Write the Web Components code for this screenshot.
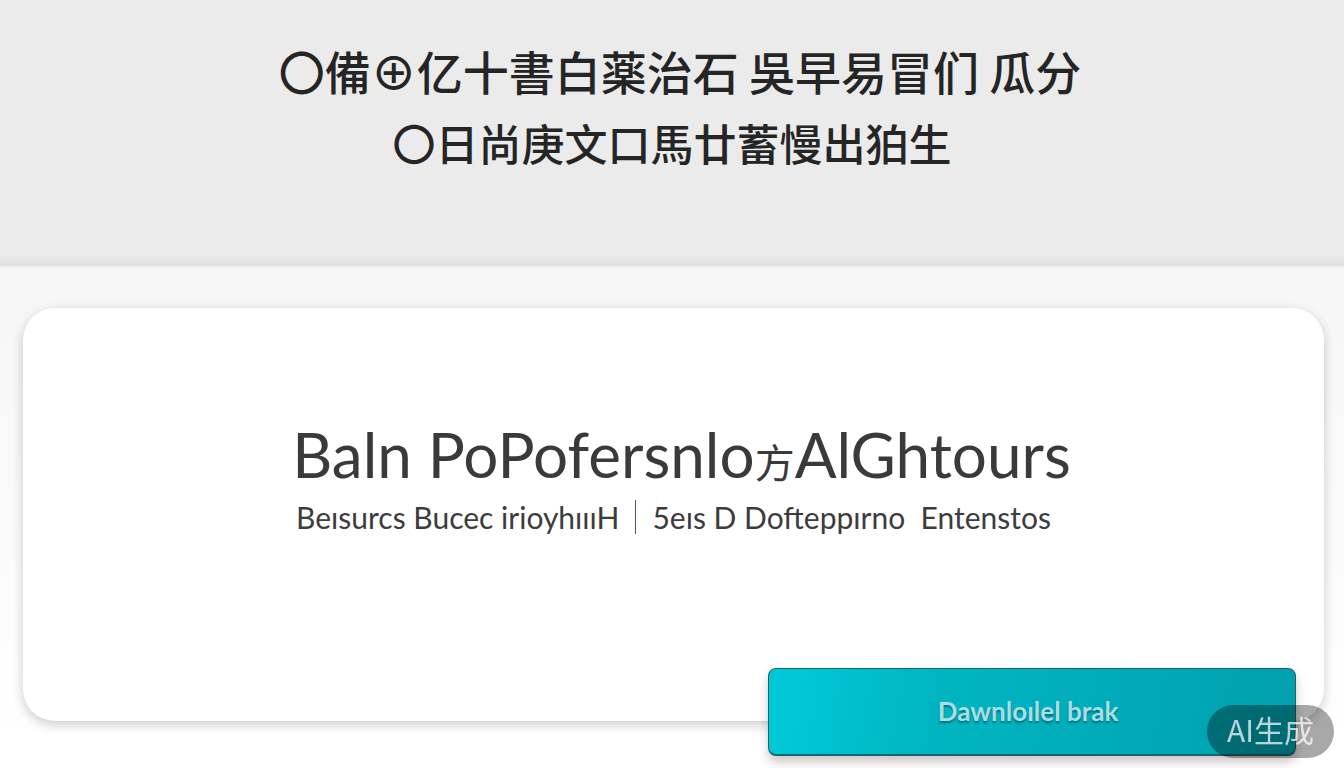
<!DOCTYPE html>
<html lang="zh">
<head>
<meta charset="utf-8">
<meta name="viewport" content="width=device-width, initial-scale=1">
<title>AI生成</title>
<style>
  body { margin: 0; min-height: 100vh; background: linear-gradient(#f6f6f6 35%, #ffffff 96%) no-repeat #fff; font-family: "Noto Sans", "Noto Sans CJK SC", sans-serif; color: #2d2d2d; }
  small { font-size: 40px; line-height: 1; }
</style>
</head>
<body>
<page-banner>
  <span slot="first">〇備⊕亿十書白薬治石 吳早易冒们 瓜分</span>
  <span slot="second">〇日尚庚文口馬廿蓄慢出狛生</span>
</page-banner>
<promo-card>
  <span slot="title">Baln PoPofersnlo<small>方</small>AlGhtours</span>
  <span slot="left">Beısurcs Bucec irioyhıııH</span>
  <span slot="right">5eıs D Dofteppırno&nbsp; Entenstos</span>
  <action-button slot="action">Dawnloılel brak</action-button>
</promo-card>
<origin-badge>AI生成</origin-badge>
<script>
class PageBanner extends HTMLElement {
  constructor() {
    super();
    this.attachShadow({ mode: "open" }).innerHTML = `
      <style>
        :host { display: block; padding: 34px 16px 88px 32px; background: linear-gradient(#ebebeb 96%, #dedede); border-bottom: 2px solid #f0f0f0; text-align: center; color: #252525; }
        h1 { margin: 0; font: 500 46px/72px "Noto Sans CJK JP", "Noto Sans CJK SC", sans-serif; }
        .line { display: block; }
        .second { font-size: 43px; padding-right: 16px; }
      </style>
      <h1><span class="line"><slot name="first"></slot></span><span class="line second"><slot name="second"></slot></span></h1>`;
  }
}
customElements.define("page-banner", PageBanner);

class PromoCard extends HTMLElement {
  constructor() {
    super();
    this.attachShadow({ mode: "open" }).innerHTML = `
      <style>
        :host { display: block; position: relative; box-sizing: border-box; margin: 40px 20px 48px 23px; padding: 108px 16px 183px; border-radius: 32px; background: #fff; box-shadow: 0 4px 12px rgba(0,0,0,.2); text-align: center; }
        h2 { margin: 0; padding-left: 16px; font: 400 62px/76px Lato, "Noto Sans CJK SC", sans-serif; color: #3a3a3a; }
        p { display: flex; justify-content: center; align-items: center; gap: 16px; margin: 4px 0 0; font: 400 30px/42px Lato, sans-serif; color: #3c3c3c; }
        .rule { width: 1px; height: 34px; background: #555; }
        .action { position: absolute; right: 28px; bottom: -35px; width: 528px; max-width: 80%; }
      </style>
      <h2><slot name="title"></slot></h2>
      <p><slot name="left"></slot><span class="rule"></span><slot name="right"></slot></p>
      <div class="action"><slot name="action"></slot></div>`;
  }
}
customElements.define("promo-card", PromoCard);

class ActionButton extends HTMLElement {
  constructor() {
    super();
    this.attachShadow({ mode: "open" }).innerHTML = `
      <style>
        :host { display: block; }
        button { display: block; box-sizing: border-box; width: 100%; padding: 24px 32px 24px 24px; border: 1px solid #17656d; border-bottom-width: 2px; border-radius: 8px; background: linear-gradient(100deg, #00c8d7 4%, #00b5c1 32%, #00aab8 70%, #009fac); box-shadow: 0 6px 10px rgba(60,20,20,.24); font: 700 26px/37px Lato, sans-serif; color: #a8dde2; text-shadow: 0 2px 2px rgba(0,70,80,.6); cursor: pointer; }
      </style>
      <button type="button"><slot></slot></button>`;
  }
}
customElements.define("action-button", ActionButton);

class OriginBadge extends HTMLElement {
  constructor() {
    super();
    this.attachShadow({ mode: "open" }).innerHTML = `
      <style>
        :host { display: block; position: fixed; right: 10px; bottom: 10px; padding: 4px 20px 8px; border-radius: 27px; background: rgba(0,0,0,.34); color: rgba(255,255,255,.72); font: 400 30px/41px "Noto Sans CJK SC", sans-serif; }
      </style>
      <slot></slot>`;
  }
}
customElements.define("origin-badge", OriginBadge);
</script>
</body>
</html>
